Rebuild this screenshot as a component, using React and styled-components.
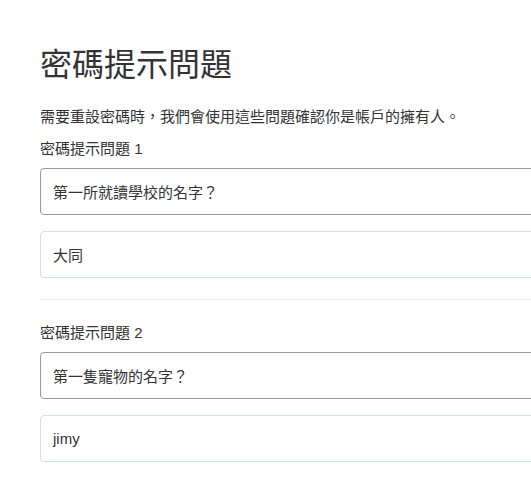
import React from 'react'
import styled, { createGlobalStyle } from 'styled-components'

const GlobalStyle = createGlobalStyle`
    html, body {
        margin: 0;
        padding: 0;
        background: #fff;
        overflow: hidden;
    }
    body {
        font-family: "Liberation Sans", "Noto Sans CJK TC", sans-serif;
        color: #333;
    }
`

const Page = styled.div`
    width: 640px;
    padding: 48px 0 0 40px;
`

const Title = styled.h1`
    margin: 0 0 24px;
    font-size: 32px;
    line-height: 35px;
    font-weight: 400;
    color: #333;
`

const Intro = styled.p`
    margin: 0 0 12px;
    font-size: 15px;
    line-height: 20px;
`

const Section = styled.div`
    display: flex;
    flex-direction: column;
    gap: 16px;
    padding-bottom: ${p => (p.$divider ? '21px' : '0')};
    border-bottom: ${p => (p.$divider ? '1px solid #eee' : 'none')};
    margin-bottom: ${p => (p.$divider ? '23px' : '0')};
`

const Label = styled.label`
    font-size: 15px;
    line-height: 20px;
    margin-bottom: -7px;
`

const Field = styled.div`
    box-sizing: border-box;
    height: 47px;
    display: flex;
    align-items: center;
    padding: 0 12px;
    border: 1px solid ${p => (p.$select ? '#999' : '#cfe0ea')};
    border-radius: 4px;
    font-size: 15px;
    color: #333;
`

const questions = [
    { label: '密碼提示問題 1', question: '第一所就讀學校的名字？', answer: '大同' },
    { label: '密碼提示問題 2', question: '第一隻寵物的名字？', answer: 'jimy' },
]

export default function App() {
    return (
        <Page>
            <GlobalStyle />
            <Title>密碼提示問題</Title>
            <Intro>需要重設密碼時，我們會使用這些問題確認你是帳戶的擁有人。</Intro>
            {questions.map((q, i) => (
                <Section key={i} $divider={i < questions.length - 1}>
                    <Label>{q.label}</Label>
                    <Field $select>{q.question}</Field>
                    <Field>{q.answer}</Field>
                </Section>
            ))}
        </Page>
    )
}
